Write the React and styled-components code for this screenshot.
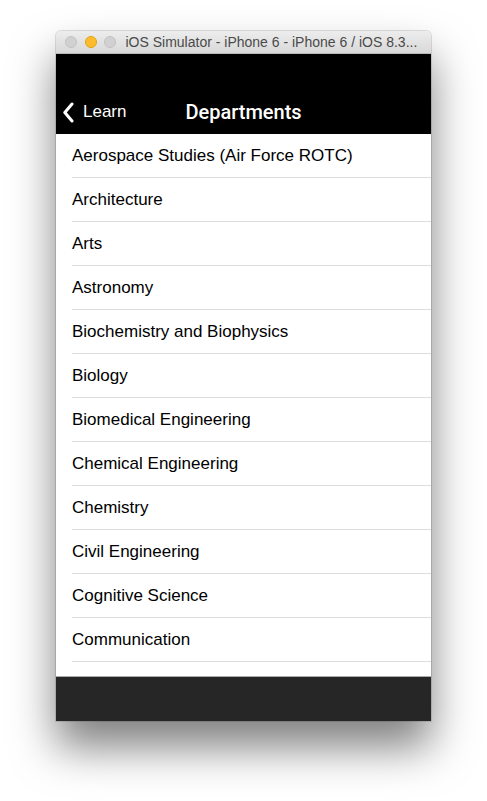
import React from 'react';
import styled, { createGlobalStyle } from 'styled-components';

const departments = [
  'Aerospace Studies (Air Force ROTC)',
  'Architecture',
  'Arts',
  'Astronomy',
  'Biochemistry and Biophysics',
  'Biology',
  'Biomedical Engineering',
  'Chemical Engineering',
  'Chemistry',
  'Civil Engineering',
  'Cognitive Science',
  'Communication',
];

const GlobalStyle = createGlobalStyle`
  html, body {
    margin: 0;
    padding: 0;
    background: #ffffff;
  }
  body {
    font-family: 'Liberation Sans', Arial, sans-serif;
  }
`;

const Desktop = styled.main`
  width: 487px;
  height: 801px;
  padding: 31px 0 0 56px;
  box-sizing: border-box;
  overflow: hidden;
`;

const Window = styled.div`
  width: 375px;
  display: flex;
  flex-direction: column;
  border-radius: 5px 5px 0 0;
  box-shadow: 0 26px 44px rgba(0, 0, 0, 0.5), 0 0 0 1px rgba(0, 0, 0, 0.12);
`;

const TitleBar = styled.div`
  height: 23px;
  display: flex;
  align-items: center;
  padding-left: 9px;
  gap: 7.5px;
  border-radius: 5px 5px 0 0;
  background: linear-gradient(#ededed, #d8d8d8);
  border-bottom: 1px solid #b9b9b9;
  box-sizing: border-box;
`;

const Light = styled.span`
  width: 12px;
  height: 12px;
  border-radius: 50%;
  box-sizing: border-box;
  background: ${({ $color }) => $color || '#d1d1d1'};
  border: 1px solid ${({ $color }) => ($color ? '#e0a40d' : '#c2c2c2')};
`;

const WindowTitle = styled.span`
  margin-left: 2px;
  font-size: 14px;
  color: #4a4a4a;
  white-space: nowrap;
`;

const Screen = styled.div`
  display: flex;
  flex-direction: column;
  height: 667px;
  background: #ffffff;
`;

const NavBar = styled.header`
  height: 80px;
  background: #000000;
  padding-top: 36px;
  box-sizing: border-box;
  position: relative;
  display: flex;
  align-items: center;
  justify-content: center;
`;

const Back = styled.div`
  position: absolute;
  left: 7px;
  top: 36px;
  height: 44px;
  display: flex;
  align-items: center;
  gap: 9px;
  color: #ffffff;
  font-size: 17px;
`;

const NavTitle = styled.h1`
  margin: 0;
  color: #ffffff;
  font-family: Roboto, 'Liberation Sans', sans-serif;
  font-size: 20px;
  font-weight: 500;
  height: 44px;
  line-height: 44px;
`;

const List = styled.ul`
  flex: 1;
  margin: 0;
  padding: 0;
  list-style: none;
  overflow: hidden;
`;

const Row = styled.li`
  height: 44px;
  margin-left: 16px;
  display: flex;
  align-items: center;
  font-size: 17px;
  color: #000000;
  border-bottom: 1px solid #dedede;
  box-sizing: border-box;
`;

const BottomBar = styled.footer`
  height: 45px;
  background: #262626;
  border-top: 1px solid #aaaaaa;
  box-sizing: border-box;
`;

const Chevron = () => (
  <svg width="11" height="21" viewBox="0 0 11 21">
    <path d="M9 2 L1.8 10.5 L9 19" fill="none" stroke="#ffffff" strokeWidth="3" strokeLinecap="round" strokeLinejoin="round" />
  </svg>
);

const App = () => (
  <>
    <GlobalStyle />
    <Desktop>
      <Window>
        <TitleBar>
          <Light />
          <Light $color="#febc2e" />
          <Light />
          <WindowTitle>iOS Simulator - iPhone 6 - iPhone 6 / iOS 8.3...</WindowTitle>
        </TitleBar>
        <Screen>
          <NavBar>
            <Back>
              <Chevron />
              <span>Learn</span>
            </Back>
            <NavTitle>Departments</NavTitle>
          </NavBar>
          <List>
            {departments.map((d) => (
              <Row key={d}>{d}</Row>
            ))}
          </List>
          <BottomBar />
        </Screen>
      </Window>
    </Desktop>
  </>
);

export default App;
